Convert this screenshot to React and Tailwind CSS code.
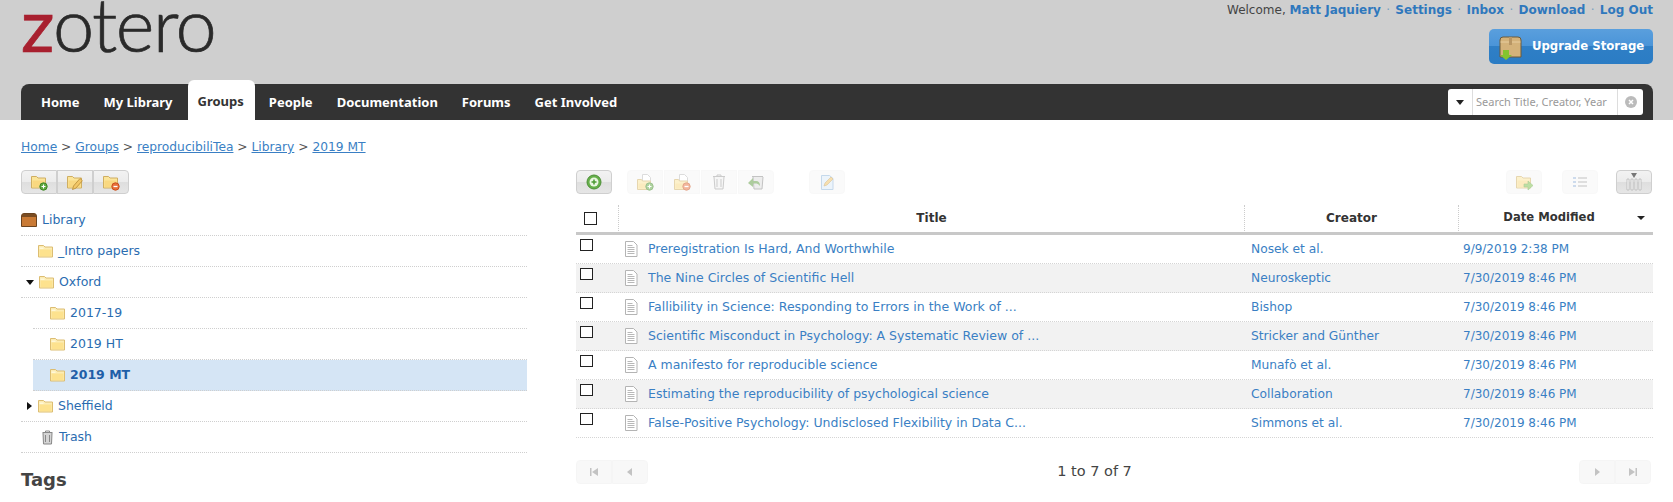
import React from "react";

const Folder = () => (
  <svg width="15" height="14" viewBox="0 0 15 14">
    <path d="M.5 1.500h5l1.500 1.500h7.500v10H.5z" fill="#fcecb4" stroke="#dcbd72" />
    <path d="M1.500 5.500h12v6.800h-12z" fill="#fde28e" />
    <path d="M1.500 3.500h4v1.500h-4z" fill="#fff8d8" />
  </svg>
);

const ToolFolder = ({ badge, page }) => (
  <svg width="17" height="17" viewBox="0 0 17 17">
    {page && <path d="M5.500.5h5l3 3v9h-8z" fill="#fff" stroke="#bbb" />}
    <path d={page ? "M.5 5.500h4l1 1.500h8v8.500H.5z" : "M.5 2.500h5l1.500 1.500h7.500v10H.5z"} fill="#fbe59a" stroke="#cfae62" />
    <path d={page ? "M1.500 9.500h11v5h-11z" : "M1.500 6.500h12v6.800h-12z"} fill="#f9d880" />
    {badge === "add" && (
      <>
        <circle cx="12.500" cy="12.500" r="3.700" fill="#5fa83f" stroke="#3f8526" />
        <path d="M12.500 10.500v4M10.500 12.500h4" stroke="#fff" strokeWidth="1.100" />
      </>
    )}
    {badge === "remove" && (
      <>
        <circle cx="12.500" cy="12.500" r="3.700" fill="#e8703a" stroke="#c94f1d" />
        <path d="M10.500 12.500h4" stroke="#fff" strokeWidth="1.300" />
      </>
    )}
    {badge === "edit" && <path d="M5.500 15.500l1-3.500 6.500-7.500 2.400 2.200-6.600 7.500z" fill="#f3c766" stroke="#b58a36" strokeWidth=".8" />}
    {badge === "arrow" && <path d="M8 10h4V7l5 4.500-5 4.500v-3H8z" fill="#7cc04a" stroke="#5b9a30" strokeWidth=".6" />}
  </svg>
);

const Doc = () => (
  <svg width="14" height="16" viewBox="0 0 14 16">
    <path d="M1.500.5h8l3.500 3.500v11.500H1.500z" fill="#fff" stroke="#b4b4b4" />
    <path d="M3.500 4.500h5M3.500 6.500h7M3.500 8.500h7M3.500 10.500h7M3.500 12.500h7" stroke="#b8b8b8" />
  </svg>
);

const rows = [
  ["Preregistration Is Hard, And Worthwhile", "Nosek et al.", "9/9/2019 2:38 PM"],
  ["The Nine Circles of Scientific Hell", "Neuroskeptic", "7/30/2019 8:46 PM"],
  ["Fallibility in Science: Responding to Errors in the Work of ...", "Bishop", "7/30/2019 8:46 PM"],
  ["Scientific Misconduct in Psychology: A Systematic Review of ...", "Stricker and Günther", "7/30/2019 8:46 PM"],
  ["A manifesto for reproducible science", "Munafò et al.", "7/30/2019 8:46 PM"],
  ["Estimating the reproducibility of psychological science", "Collaboration", "7/30/2019 8:46 PM"],
  ["False-Positive Psychology: Undisclosed Flexibility in Data C...", "Simmons et al.", "7/30/2019 8:46 PM"],
];

const TreeRow = ({ indent = "", iconPad, text, arrow, selected, icon }) => (
  <div className={indent}>
    <div
      className={`flex h-[31px] items-center border-b border-dotted border-[#cfcfcf] ${iconPad} ${
        selected ? "bg-[#d5e5f5] font-bold text-[#1f5fa8]" : "text-[#2a6cb0]"
      }`}
    >
      {arrow === "down" && <span className="mr-[5px] h-0 w-0 border-x-[4px] border-t-[5px] border-x-transparent border-t-[#111]" />}
      {arrow === "right" && <span className="mr-[6px] h-0 w-0 border-y-[4px] border-l-[5px] border-y-transparent border-l-[#111]" />}
      {icon || <Folder />}
      <span className="ml-[5px]">{text}</span>
    </div>
  </div>
);

const TBtn = ({ children, className = "", active }) => (
  <div
    className={`flex h-[24px] w-[36px] items-center justify-center border ${
      active
        ? "border-[#cfcfcf] bg-[linear-gradient(#f2f2f2_0%,#ececec_50%,#dedede_50%,#e6e6e6_100%)]"
        : "border-[#f2f2f2] bg-[#f6f6f6]"
    } ${className}`}
  >
    {children}
  </div>
);

const Link = ({ children }) => <a className="text-[#3a7fc4] underline">{children}</a>;
const Sep = () => <span className="mx-[1.5px] text-[#77a0c0]"> · </span>;

export default function App() {
  return (
    <div className="h-[502px] w-[1673px] overflow-hidden bg-white font-['DejaVu_Sans',sans-serif] text-[12px] text-[#333]">
      <header className="h-[120px] bg-[#cfcfcf] px-[21px] pr-[20px]">
        <div className="flex h-[80px] justify-between">
          <div className="h-[80px] font-['Lato',sans-serif] text-[74px] leading-[47px] font-light tracking-[-1.5px] text-[#2a2a2a] [-webkit-text-stroke:0.7px_#2a2a2a]">
            <span className="font-normal text-[#a8202f] [-webkit-text-stroke:0.7px_#a8202f]">z</span>otero
          </div>
          <div className="flex flex-col items-end">
            <div className="mt-[3px] h-[14px] text-[12px] leading-[14px] text-[#444]">
              Welcome, <b className="text-[#2f78bd]">Matt Jaquiery</b>
              <Sep /><b className="text-[#2f78bd]">Settings</b>
              <Sep /><b className="text-[#2f78bd]">Inbox</b>
              <Sep /><b className="text-[#2f78bd]">Download</b>
              <Sep /><b className="text-[#2f78bd]">Log Out</b>
            </div>
            <div className="mt-[12px] flex h-[35px] w-[164px] items-center rounded-[5px] bg-[linear-gradient(#5a9fdd_0%,#4a94d8_50%,#2f7fc6_50%,#2b7cc4_100%)] pl-[10px] text-[11.7px] font-bold text-white">
              <svg width="23" height="28" viewBox="0 0 23 28">
                <path d="M1 7q0-3 3-3h15q3 0 3 3v17H1z" fill="#d4b27a" stroke="#6d5a3a" />
                <path d="M1.500 9h20" stroke="#e7cd9f" />
                <path d="M10 4h3v8h-3z" fill="#b89664" />
                <path d="M4 17h6v5h3l-6 5-6-5h3z" fill="#84c42e" />
              </svg>
              <span className="ml-[10px] pt-[1px]">Upgrade Storage</span>
            </div>
          </div>
        </div>
        <nav className="relative mt-[4px] flex h-[36px] items-center rounded-t-[8px] bg-[#333] pl-[8px] font-['Noto_Sans',sans-serif] text-[13px] font-bold text-white">
          <span className="relative top-[1px] px-[12px]">Home</span>
          <span className="relative top-[1px] pr-[12px] pl-[12px]">My Library</span>
          <span className="relative top-[-2px] ml-[3px] flex h-[40px] items-center rounded-t-[6px] bg-white pt-[3px] pr-[11px] pl-[10px] text-[#333]">Groups</span>
          <span className="relative top-[1px] pr-[12px] pl-[14px]">People</span>
          <span className="relative top-[1px] px-[12px]">Documentation</span>
          <span className="relative top-[1px] px-[12px]">Forums</span>
          <span className="relative top-[1px] px-[12px]">Get Involved</span>
          <div className="absolute top-[5px] right-[10px] flex h-[26px] w-[195px] items-center rounded-[3px] bg-white text-[11px] font-normal text-[#999]">
            <div className="flex h-full w-[25px] items-center justify-center border-r border-[#ddd]">
              <span className="h-0 w-0 border-x-[4px] border-t-[5px] border-x-transparent border-t-[#222]" />
            </div>
            <div className="flex-1 pl-[3px]">Search Title, Creator, Year</div>
            <div className="flex h-full w-[26px] items-center justify-center border-l border-[#ddd]">
              <svg width="12" height="12" viewBox="0 0 12 12">
                <circle cx="6" cy="6" r="6" fill="#bbb" />
                <path d="M4 4l4 4M8 4l-4 4" stroke="#fff" strokeWidth="1.500" />
              </svg>
            </div>
          </div>
        </nav>
      </header>

      <div className="px-[21px] pt-[19px] pr-[20px]">
        <div className="h-[16px] text-[12.25px] leading-[16px] text-[#555]">
          <Link>Home</Link> &gt; <Link>Groups</Link> &gt; <Link>reproducibiliTea</Link> &gt; <Link>Library</Link> &gt; <Link>2019 MT</Link>
        </div>

        <div className="mt-[15px] flex">
          <aside className="w-[506px] text-[12.5px]">
            <div className="flex h-[24px]">
              <TBtn active className="rounded-l-[4px]"><ToolFolder badge="add" /></TBtn>
              <TBtn active><ToolFolder badge="edit" /></TBtn>
              <TBtn active className="rounded-r-[4px]"><ToolFolder badge="remove" /></TBtn>
            </div>
            <div className="mt-[11px]">
              <TreeRow
                iconPad=""
                text="Library"
                icon={
                  <svg width="16" height="14" viewBox="0 0 16 14">
                    <path d="M.5 3q0-2.500 2.500-2.500h10q2.500 0 2.500 2.500v10.500H.5z" fill="#c97a35" stroke="#6b4420" />
                    <path d="M1 1h14v3H1z" fill="#7a4c22" />
                  </svg>
                }
              />
              <TreeRow iconPad="pl-[17px]" text="_Intro papers" />
              <TreeRow iconPad="pl-[5px]" arrow="down" text="Oxford" />
              <TreeRow indent="pl-[12px]" iconPad="pl-[17px]" text="2017-19" />
              <TreeRow indent="pl-[12px]" iconPad="pl-[17px]" text="2019 HT" />
              <TreeRow indent="pl-[12px]" iconPad="pl-[17px]" text="2019 MT" selected />
              <TreeRow iconPad="pl-[6px]" arrow="right" text="Sheffield" />
              <TreeRow
                iconPad="pl-[21px]"
                text={<span className="ml-[1px]">Trash</span>}
                icon={
                  <svg width="11" height="15" viewBox="0 0 11 15">
                    <path d="M.5 2.500h10M1 3l.5 11h8L10 3" fill="#d4d4d4" stroke="#888" />
                    <path d="M3.500 5v7M7.500 5v7M3.500 2.500V1h4v1.500" fill="none" stroke="#888" />
                  </svg>
                }
              />
            </div>
            <h2 className="mt-[16px] text-[18px] leading-[22px] font-bold text-[#444]">Tags</h2>
          </aside>

          <main className="ml-[49px] w-[1077px]">
            <div className="flex h-[24px] items-center pr-[1px]">
              <TBtn active className="rounded-[4px]">
                <svg width="16" height="16" viewBox="0 0 16 16">
                  <circle cx="8" cy="8" r="7" fill="#66b04a" stroke="#4d8f37" />
                  <circle cx="8" cy="8" r="4.500" fill="#eaf6e2" />
                  <path d="M8 5.500v5M5.500 8h5" stroke="#4b9a32" strokeWidth="1.500" />
                </svg>
              </TBtn>
              <div className="ml-[15px] flex gap-px opacity-50">
                <TBtn className="rounded-l-[4px]"><ToolFolder page badge="add" /></TBtn>
                <TBtn><ToolFolder page badge="remove" /></TBtn>
                <TBtn>
                  <svg width="14" height="16" viewBox="0 0 14 16"><path d="M1 2.500h12M2 3l1 12h8l1-12" fill="#eee" stroke="#999" /><path d="M5 5v8M9 5v8M5 2.500V1h4v1.500" fill="none" stroke="#999" /></svg>
                </TBtn>
                <TBtn className="rounded-r-[4px]">
                  <svg width="16" height="16" viewBox="0 0 16 16"><path d="M4 2.500h11M5 3l1 12h8l1-12" fill="#ddd" stroke="#888" /><path d="M0 9l5-5v3h3q4 0 4 5-2-3-4-2.500H5V13z" fill="#5d9a3f" /></svg>
                </TBtn>
              </div>
              <div className="ml-[35px] opacity-50">
                <TBtn className="rounded-[4px]">
                  <svg width="15" height="17" viewBox="0 0 15 17"><path d="M1.500 1.500h8l3.500 3v11H1.500z" fill="#dbeaf8" stroke="#8db4d8" /><path d="M4 12l1-3 6-6 2 2-6 6z" fill="#f0c060" stroke="#b58a36" strokeWidth=".6" /></svg>
                </TBtn>
              </div>
              <div className="ml-auto flex items-center">
                <div className="opacity-50"><TBtn className="rounded-[4px]"><ToolFolder badge="arrow" /></TBtn></div>
                <div className="ml-[20px] opacity-50">
                  <TBtn className="rounded-[4px]">
                    <svg width="14" height="14" viewBox="0 0 14 14"><path d="M0 2h3v2H0zM0 6h3v2H0zM0 10h3v2H0z" fill="#9db8dc" /><path d="M5 3h9M5 7h9M5 11h9" stroke="#888" /></svg>
                  </TBtn>
                </div>
                <TBtn active className="ml-[18px] rounded-[4px]">
                  <svg width="18" height="18" viewBox="0 0 18 18"><path d="M2 6h2v11H2zM6 6h2v11H6zM10 6h2v11h-2zM14 6h2v11h-2z" fill="#f8f8f8" stroke="#aaa" strokeWidth=".6" /><path d="M6 0h6L9 5z" fill="#777" /></svg>
                </TBtn>
              </div>
            </div>

            <div className="mt-[11px] flex h-[30px] items-start border-b-[3px] border-[#c8c8c8] font-bold text-[#333]">
              <div className="flex h-[26px] w-[43px] items-center border-r border-dotted border-[#ccc] pl-[8px]">
                <span className="h-[13px] w-[13px] border border-[#222] bg-white" />
              </div>
              <div className="flex h-[26px] w-[626px] items-center justify-center border-r border-dotted border-[#ccc]">Title</div>
              <div className="flex h-[26px] w-[214px] items-center justify-center border-r border-dotted border-[#ccc]">Creator</div>
              <div className="relative flex h-[26px] flex-1 items-center justify-center pr-[14px] text-[11.6px]">
                Date Modified
                <span className="absolute right-[8px] h-0 w-0 border-x-[4px] border-t-[4px] border-x-transparent border-t-[#222]" />
              </div>
            </div>

            {rows.map((r, i) => (
              <div key={i} className={`flex h-[29px] items-center border-b border-dotted border-[#d5d5d5] text-[#3a7fc4] ${i % 2 ? "bg-[#f2f2f2]" : "bg-white"}`}>
                <div className="flex h-full w-[43px] items-start pt-[4px] pl-[4px]">
                  <span className="h-[12px] w-[13px] border border-[#222] bg-white" />
                </div>
                <div className="flex w-[626px] items-center pl-[5px] text-[12.5px]">
                  <Doc />
                  <span className="ml-[10px]">{r[0]}</span>
                </div>
                <div className="w-[214px] pl-[6px] text-[12.25px]">{r[1]}</div>
                <div className="pl-[4px]">{r[2]}</div>
              </div>
            ))}

            <div className="mt-[22px] flex items-center justify-between pr-[2px]">
              <div className="flex opacity-70">
                <TBtn className="w-[36px] rounded-l-[4px]">
                  <svg width="8" height="8" viewBox="0 0 8 8"><path d="M0 0h1.500v8H0zM8 0v8L2 4z" fill="#aaa" /></svg>
                </TBtn>
                <TBtn className="w-[36px] rounded-r-[4px]">
                  <svg width="6" height="8" viewBox="0 0 6 8"><path d="M5 0v8L0 4z" fill="#aaa" /></svg>
                </TBtn>
              </div>
              <div className="mr-[38px] text-[14.5px] text-[#444]">1 to 7 of 7</div>
              <div className="flex opacity-70">
                <TBtn className="rounded-l-[4px]">
                  <svg width="6" height="8" viewBox="0 0 6 8"><path d="M1 0v8l5-4z" fill="#aaa" /></svg>
                </TBtn>
                <TBtn className="rounded-r-[4px]">
                  <svg width="8" height="8" viewBox="0 0 8 8"><path d="M8 0H6.500v8H8zM0 0v8l6-4z" fill="#aaa" /></svg>
                </TBtn>
              </div>
            </div>
          </main>
        </div>
      </div>
    </div>
  );
}
